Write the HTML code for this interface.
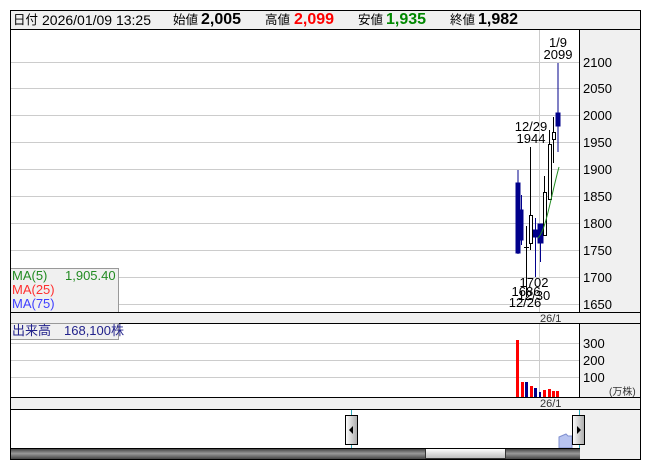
<!DOCTYPE html>
<html><head><meta charset="utf-8"><style>
*{margin:0;padding:0;box-sizing:border-box}
body{width:653px;height:470px;background:#fff;position:relative;font-family:"Liberation Sans","Noto Sans CJK JP",sans-serif;overflow:hidden}
.a{position:absolute}
.t{position:absolute;top:0;white-space:nowrap;line-height:18px}
</style></head><body>
<div class="a" style="left:10px;top:10px;width:631px;height:20px;border:1px solid #000;background:#f0f0f0;font-size:14px">
<div class="t" style="left:2px;font-size:12.5px">日付</div>
<div class="t" style="left:31px;font-size:14px">2026/01/09 13:25</div>
<div class="t" style="left:162px;font-size:12.5px">始値</div><div class="t" style="left:190px;font-size:16px;font-weight:bold">2,005</div>
<div class="t" style="left:254px;font-size:12.5px">高値</div><div class="t" style="left:283px;font-size:16px;font-weight:bold;color:#f00">2,099</div>
<div class="t" style="left:347px;font-size:12.5px">安値</div><div class="t" style="left:375px;font-size:16px;font-weight:bold;color:#080">1,935</div>
<div class="t" style="left:439px;font-size:12.5px">終値</div><div class="t" style="left:467px;font-size:16px;font-weight:bold">1,982</div>
</div>
<svg class="a" style="left:0;top:0" width="653" height="470" font-family="Liberation Sans, sans-serif">
<rect x="10" y="30" width="631" height="430" fill="#fff"/>
<rect x="579" y="30" width="61" height="282" fill="#f0f0f0"/>
<line x1="579.5" y1="30" x2="579.5" y2="312" stroke="#000"/>
<g stroke="#ccc">
<line x1="11" y1="62.5" x2="579" y2="62.5"/><line x1="11" y1="88.5" x2="579" y2="88.5"/><line x1="11" y1="115.5" x2="579" y2="115.5"/><line x1="11" y1="142.5" x2="579" y2="142.5"/><line x1="11" y1="169.5" x2="579" y2="169.5"/><line x1="11" y1="196.5" x2="579" y2="196.5"/><line x1="11" y1="223.5" x2="579" y2="223.5"/><line x1="11" y1="250.5" x2="579" y2="250.5"/><line x1="11" y1="277.5" x2="579" y2="277.5"/><line x1="11" y1="304.5" x2="579" y2="304.5"/>
<line x1="539.5" y1="30" x2="539.5" y2="312"/>
</g>
<g font-size="13" fill="#000">
<text x="583" y="67">2100</text><text x="583" y="93">2050</text><text x="583" y="120">2000</text><text x="583" y="147">1950</text><text x="583" y="174">1900</text><text x="583" y="201">1850</text><text x="583" y="228">1800</text><text x="583" y="255">1750</text><text x="583" y="282">1700</text><text x="583" y="309">1650</text>
</g>
<g stroke="#00008b" fill="#00008b">
<line x1="518" y1="170" x2="518" y2="254"/><rect x="516" y="183" width="4" height="70"/>
<line x1="521.5" y1="195" x2="521.5" y2="245"/><rect x="520" y="210" width="3" height="30"/>
<line x1="535.5" y1="218" x2="535.5" y2="277"/><rect x="533" y="230" width="5" height="7"/>
<line x1="540.5" y1="224" x2="540.5" y2="262"/><rect x="538" y="224" width="5" height="19"/>
<line x1="558" y1="63" x2="558" y2="152"/><rect x="556" y="113" width="4" height="13"/>
</g>
<g stroke="#000" fill="#fff">
<line x1="526.5" y1="226" x2="526.5" y2="297"/><line x1="524" y1="247.5" x2="529" y2="247.5"/>
<line x1="530.5" y1="147" x2="530.5" y2="250"/><rect x="529.5" y="215.5" width="3" height="28"/>
<line x1="544.5" y1="176" x2="544.5" y2="235"/><rect x="543.5" y="192.5" width="3" height="43"/>
<line x1="549.5" y1="130" x2="549.5" y2="199"/><rect x="548.5" y="144.5" width="3" height="55"/>
<line x1="553.5" y1="117" x2="553.5" y2="163"/><rect x="552.5" y="132.5" width="3" height="7"/>
</g>
<path d="M538 238 C546 230 550 200 559 167" stroke="#228b22" fill="none"/>
<g font-size="13" fill="#000" text-anchor="middle">
<text x="558" y="47">1/9</text><text x="558" y="59">2099</text>
<text x="531" y="131">12/29</text><text x="531" y="143">1944</text>
<text x="534" y="287">1702</text><text x="526" y="296">1686</text><text x="534" y="300">12/30</text><text x="525" y="307">12/26</text>
</g>
<rect x="10.5" y="268.5" width="108" height="44" fill="#f0f0f0" stroke="#999"/>
<g font-size="13">
<text x="12" y="280" fill="#228b22">MA(5)</text><text x="65" y="280" fill="#228b22">1,905.40</text>
<text x="12" y="294" fill="#ff3030">MA(25)</text>
<text x="12" y="308" fill="#4040ff">MA(75)</text>
</g>
<rect x="11" y="312" width="629" height="11" fill="#f0f0f0"/>
<line x1="10" y1="312.5" x2="641" y2="312.5" stroke="#000"/><line x1="10" y1="323.5" x2="641" y2="323.5" stroke="#000"/>
<text x="540" y="322" font-size="11" fill="#333">26/1</text>
<rect x="579" y="324" width="61" height="73" fill="#f0f0f0"/>
<line x1="579.5" y1="324" x2="579.5" y2="397" stroke="#000"/>
<g stroke="#ccc"><line x1="11" y1="343.5" x2="579" y2="343.5"/><line x1="11" y1="360.5" x2="579" y2="360.5"/><line x1="11" y1="377.5" x2="579" y2="377.5"/><line x1="539.5" y1="324" x2="539.5" y2="397"/></g>
<g font-size="13"><text x="583" y="348">300</text><text x="583" y="365">200</text><text x="583" y="382">100</text></g>
<text x="609" y="395" font-size="10" fill="#333">(万株)</text>
<g fill="#f00"><rect x="516" y="340" width="3" height="57"/><rect x="521" y="382" width="3" height="15"/><rect x="530" y="386" width="3" height="11"/><rect x="543" y="390" width="3" height="7"/><rect x="548" y="389" width="3" height="8"/><rect x="552" y="391" width="3" height="6"/><rect x="556" y="391" width="3" height="6"/></g>
<g fill="#00008b"><rect x="525" y="382" width="3" height="15"/><rect x="534" y="388" width="3" height="9"/><rect x="539" y="392" width="2" height="5"/></g>
<rect x="10.5" y="323.5" width="108" height="16" fill="#f0f0f0" stroke="#999"/>
<text x="12" y="335" font-size="13" fill="#22228b">出来高　168,100株</text>
<rect x="11" y="397" width="629" height="13" fill="#f0f0f0"/>
<line x1="10" y1="397.5" x2="641" y2="397.5" stroke="#000"/><line x1="10" y1="409.5" x2="641" y2="409.5" stroke="#000"/>
<text x="540" y="407" font-size="11" fill="#333">26/1</text>
<rect x="580" y="410" width="60" height="49" fill="#f0f0f0"/>
<line x1="351.5" y1="410" x2="351.5" y2="459" stroke="#3ab"/><line x1="579.5" y1="410" x2="579.5" y2="459" stroke="#3ab"/>
<path d="M559 448 L559 437 L566 434 L568 436 L572 436 L572 448Z" fill="#b8c4f0" stroke="#8090d0"/>
<defs><linearGradient id="d" x1="0" y1="0" x2="0" y2="1"><stop offset="0" stop-color="#333"/><stop offset=".5" stop-color="#999"/><stop offset="1" stop-color="#444"/></linearGradient>
<linearGradient id="l" x1="0" y1="0" x2="0" y2="1"><stop offset="0" stop-color="#fff"/><stop offset="1" stop-color="#bbb"/></linearGradient>
<linearGradient id="h" x1="0" y1="0" x2="1" y2="0"><stop offset="0" stop-color="#fff"/><stop offset="1" stop-color="#aaa"/></linearGradient></defs>
<rect x="10" y="448" width="570" height="11" fill="url(#d)"/>
<rect x="425.5" y="448.5" width="80" height="10" fill="url(#l)" stroke="#333"/>
<line x1="10" y1="448.5" x2="580" y2="448.5" stroke="#000"/>
<rect x="345.5" y="415.5" width="12" height="29" fill="url(#h)" stroke="#000"/><path d="M349 430 L353 426 L353 434Z" fill="#000"/>
<rect x="572.5" y="415.5" width="12" height="29" fill="url(#h)" stroke="#000"/><path d="M581 430 L577 426 L577 434Z" fill="#000"/>
<rect x="10.5" y="10.5" width="630" height="449" fill="none" stroke="#000"/>
</svg>
</body></html>
